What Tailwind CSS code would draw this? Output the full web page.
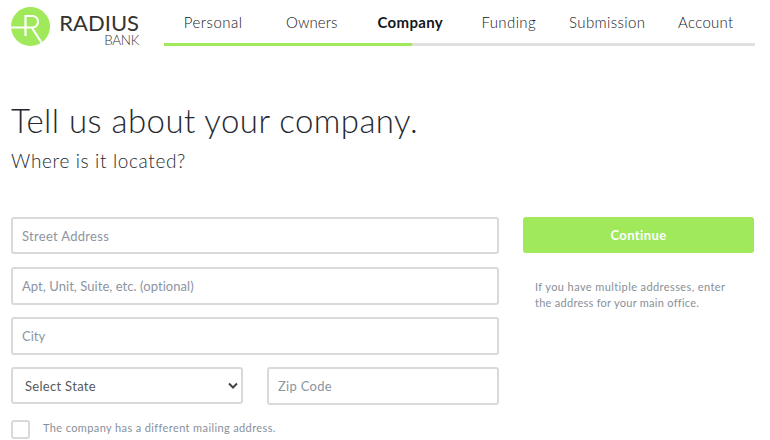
<!DOCTYPE html>
<html lang="en">
<head>
    <meta charset="UTF-8">
    <meta name="viewport" content="width=device-width, initial-scale=1.0">
    <title>Radius Bank - Company</title>
    <script src="https://cdn.jsdelivr.net/npm/@tailwindcss/browser@4"></script>
</head>
<body class="h-[440px] overflow-hidden bg-white font-['Lato','Open_Sans',sans-serif] text-[#25282f]">

    <!-- Header -->
    <header class="flex h-[46px] pl-[11px]">
        <svg class="mt-[7px] h-[39px] w-[39px] shrink-0" viewBox="0 0 39 39" fill="none">
            <circle cx="19.5" cy="19.5" r="19.5" fill="#9fe95a"/>
            <path d="M0 20.5H22A5.8 5.8 0 0 0 22 9H14.5V29M20.8 20.5L30.5 35.5" stroke="#fff" stroke-width="2.2"/>
        </svg>
        <div class="ml-2 flex w-[82px] shrink-0 flex-col items-end pt-[12px]">
            <div class="mr-px text-[22px] leading-[22px] text-[#35332f]">RADIUS</div>
            <div class="mr-px text-[13.5px] leading-[12px] font-light tracking-[-0.3px] text-[#35332f]">BANK</div>
        </div>
        <nav class="ml-6 flex w-[591px] flex-col">
            <div class="grid h-[43px] grid-cols-6 pt-[11px] text-center text-[15px] leading-[22px] font-light whitespace-nowrap text-[#15171c]">
                <a><span class="tracking-[0.5px]">Personal</span></a>
                <a><span class="tracking-[0.05px]">Owners</span></a>
                <a class="font-bold"><span class="tracking-[0.35px]">Company</span></a>
                <a><span class="tracking-[0.4px]">Funding</span></a>
                <a><span class="tracking-[0.4px]">Submission</span></a>
                <a><span class="tracking-[0.3px]">Account</span></a>
            </div>
            <div class="h-[3px] bg-[#e0e0e0]">
                <div class="h-full w-[248px] bg-[#9fe95a]"></div>
            </div>
        </nav>
    </header>

    <main class="px-[11px]">
        <h1 class="mt-[53px] h-[43px] text-[33px] leading-[42px] font-light tracking-[0.45px] whitespace-nowrap">Tell us about your company.</h1>
        <h2 class="mt-[6px] h-[26px] text-[19px] leading-[26px] font-light tracking-[0.64px] whitespace-nowrap">Where is it located?</h2>

        <div class="mt-[43px] flex gap-6">
            <!-- Address form -->
            <form class="flex w-[488px] flex-col text-[13px]">
                <input type="text" placeholder="Street Address" class="h-[37px] rounded-[3px] border-2 border-[#d9d9d9] px-[9px] tracking-[0.3px] placeholder:text-[#8b95a0]">
                <input type="text" placeholder="Apt, Unit, Suite, etc. (optional)" class="mt-[13px] h-[38px] rounded-[3px] border-2 border-[#d9d9d9] px-[9px] tracking-[0.06px] placeholder:text-[#8b95a0]">
                <input type="text" placeholder="City" class="mt-3 h-[38px] rounded-[3px] border-2 border-[#d9d9d9] px-[9px] placeholder:text-[#8b95a0]">
                <div class="mt-3 flex h-[38px] gap-6">
                    <div class="flex h-[37px] w-[232px] items-center justify-between rounded-[3px] border-2 border-[#d9d9d9] pr-[3px] pl-3 text-[#55595c]">
                        <span class="pt-0.5 tracking-[0.3px]">Select State</span>
                        <svg class="h-[10px] w-[10px]" viewBox="0 0 10 10" fill="none">
                            <path d="M1 2.5L5 6.5L9 2.5" stroke="#444" stroke-width="2"/>
                        </svg>
                    </div>
                    <input type="text" placeholder="Zip Code" class="h-[38px] w-[232px] rounded-[3px] border-2 border-[#d9d9d9] px-[9px] tracking-[0.28px] placeholder:text-[#8b95a0]">
                </div>
                <label class="mt-[15px] flex gap-[13px] text-[11px] text-[#87909a]">
                    <input type="checkbox" class="h-[19px] w-[19px] appearance-none rounded-[3px] border-2 border-[#d9d9d9]">
                    <span class="leading-[16px] tracking-[0.38px]">The company has a different mailing address.</span>
                </label>
            </form>

            <aside class="w-[231px]">
                <button class="h-9 w-full rounded-[3px] bg-[#9fe95a] pt-0.5 text-[13px] font-bold tracking-[0.4px] text-white">Continue</button>
                <p class="mt-[26px] pl-3 text-[11px] leading-[16px] whitespace-nowrap text-[#87909a]"><span class="tracking-[0.4px]">If you have multiple addresses, enter</span><br><span class="tracking-[0.27px]">the address for your main office.</span></p>
            </aside>
        </div>
    </main>

</body>
</html>
